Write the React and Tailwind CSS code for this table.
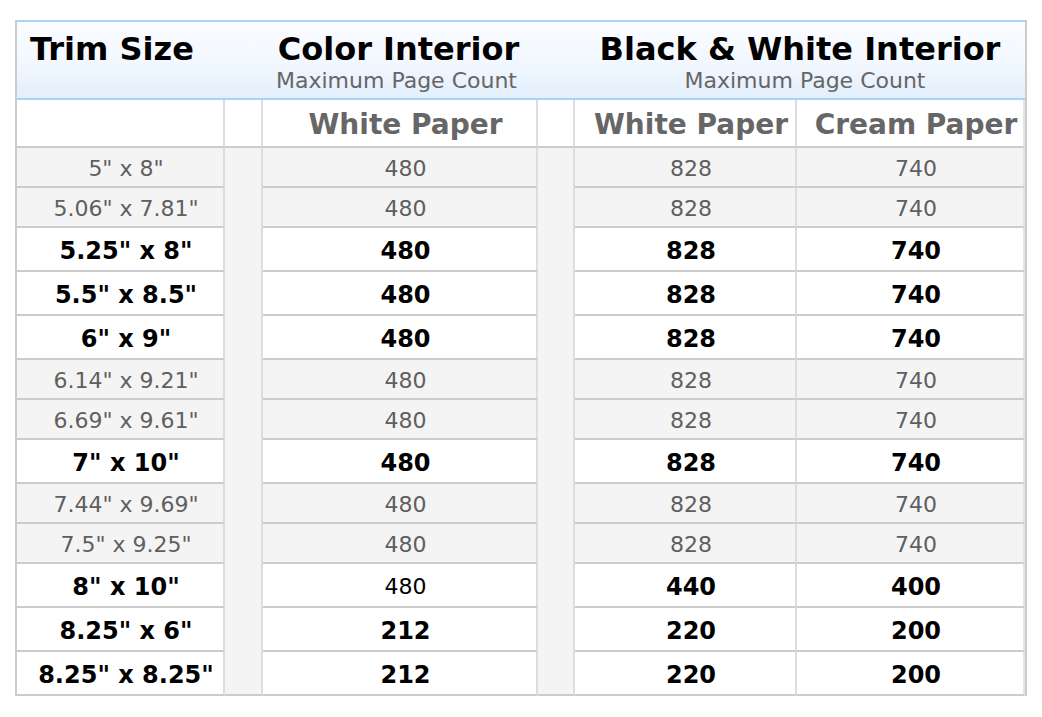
import React from "react";

const rows = [
  { size: '5" x 8"', c: "480", w: "828", cr: "740", bold: false },
  { size: '5.06" x 7.81"', c: "480", w: "828", cr: "740", bold: false },
  { size: '5.25" x 8"', c: "480", w: "828", cr: "740", bold: true },
  { size: '5.5" x 8.5"', c: "480", w: "828", cr: "740", bold: true },
  { size: '6" x 9"', c: "480", w: "828", cr: "740", bold: true },
  { size: '6.14" x 9.21"', c: "480", w: "828", cr: "740", bold: false },
  { size: '6.69" x 9.61"', c: "480", w: "828", cr: "740", bold: false },
  { size: '7" x 10"', c: "480", w: "828", cr: "740", bold: true },
  { size: '7.44" x 9.69"', c: "480", w: "828", cr: "740", bold: false },
  { size: '7.5" x 9.25"', c: "480", w: "828", cr: "740", bold: false },
  { size: '8" x 10"', c: "480", w: "440", cr: "400", bold: true, plainColor: true },
  { size: '8.25" x 6"', c: "212", w: "220", cr: "200", bold: true },
  { size: '8.25" x 8.25"', c: "212", w: "220", cr: "200", bold: true },
];

const font = { fontFamily: '"DejaVu Sans", Verdana, sans-serif' };

function Cell({ bold, plain, last, children }) {
  const bg = bold ? "bg-white h-[44px]" : "bg-[#f4f4f4] h-[40px]";
  const txt = plain
    ? "text-[22px] font-normal text-black"
    : bold
    ? "text-[24px] font-bold text-black"
    : "text-[22px] font-normal text-[#5f5f5f]";
  const br = last ? "border-r-2 border-r-[#e4e4e4]" : "border-r-2 border-r-[#dddddd]";
  return (
    <div
      className={`flex items-center justify-center pl-[12px] pt-[4px] leading-none whitespace-nowrap border-b-2 border-b-[#cccccc] ${br} ${bg} ${txt}`}
    >
      {children}
    </div>
  );
}

export default function App() {
  return (
    <div className="w-[1042px] h-[717px] bg-white pt-[20px] pl-[15px]" style={font}>
      <div className="w-[1012px] border-x-2 border-[#cccccc]">
        {/* Header */}
        <div className="grid grid-cols-[246px_275px_37px_450px] h-[80px] border-y-2 border-[#a9d3f8] bg-gradient-to-b from-[#fafdff] via-[#f3f8ff] to-[#e3effc]">
          <div className="pl-[13px] pt-[8px] text-[32px] leading-[38px] font-bold text-black whitespace-nowrap">
            Trim Size
          </div>
          <div className="flex flex-col items-center pt-[8px] whitespace-nowrap">
            <div className="text-[32px] leading-[38px] font-bold text-black pr-[4px]">Color Interior</div>
            <div className="text-[22px] leading-[26px] text-[#666666] pr-[8px]">Maximum Page Count</div>
          </div>
          <div />
          <div className="flex flex-col items-center pt-[8px] whitespace-nowrap">
            <div className="text-[32px] leading-[38px] font-bold text-black">Black &amp; White Interior</div>
            <div className="text-[22px] leading-[26px] text-[#666666] pl-[10px]">Maximum Page Count</div>
          </div>
        </div>

        {/* Body */}
        <div className="grid grid-cols-[208px_38px_275px_37px_222px_228px]">
          {/* sub header row */}
          <div className="h-[48px] bg-white border-b-2 border-b-[#cccccc] border-r-2 border-r-[#dddddd]" />
          <div className="h-[48px] bg-white border-b-2 border-b-[#cccccc] border-r-2 border-r-[#dddddd]" />
          <div className="h-[48px] flex items-center justify-center pl-[12px] pt-[4px] bg-white border-b-2 border-b-[#cccccc] border-r-2 border-r-[#dddddd] text-[28px] leading-none font-bold text-[#666666] whitespace-nowrap">
            White Paper
          </div>
          <div className="h-[48px] bg-white border-b-2 border-b-[#cccccc] border-r-2 border-r-[#dddddd]" />
          <div className="h-[48px] flex items-center justify-center pl-[12px] pt-[4px] bg-white border-b-2 border-b-[#cccccc] border-r-2 border-r-[#dddddd] text-[28px] leading-none font-bold text-[#666666] whitespace-nowrap">
            White Paper
          </div>
          <div className="h-[48px] flex items-center justify-center pl-[12px] pt-[4px] bg-white border-b-2 border-b-[#cccccc] border-r-2 border-r-[#e4e4e4] text-[28px] leading-none font-bold text-[#666666] whitespace-nowrap">
            Cream Paper
          </div>

          {/* spacer columns spanning all data rows */}
          <div className="col-[2/3] row-[2/15] bg-[#f4f4f4] border-r-2 border-r-[#dddddd] border-b-2 border-b-[#cccccc]" />
          <div className="col-[4/5] row-[2/15] bg-[#f4f4f4] border-r-2 border-r-[#dddddd] border-b-2 border-b-[#cccccc]" />

          {rows.map((r, i) => (
            <React.Fragment key={i}>
              <div className="col-[1/2]" style={{ gridRow: i + 2 }}>
                <Cell bold={r.bold}>{r.size}</Cell>
              </div>
              <div className="col-[3/4]" style={{ gridRow: i + 2 }}>
                <Cell bold={r.bold} plain={r.plainColor}>{r.c}</Cell>
              </div>
              <div className="col-[5/6]" style={{ gridRow: i + 2 }}>
                <Cell bold={r.bold}>{r.w}</Cell>
              </div>
              <div className="col-[6/7]" style={{ gridRow: i + 2 }}>
                <Cell bold={r.bold} last>{r.cr}</Cell>
              </div>
            </React.Fragment>
          ))}
        </div>
      </div>
    </div>
  );
}
